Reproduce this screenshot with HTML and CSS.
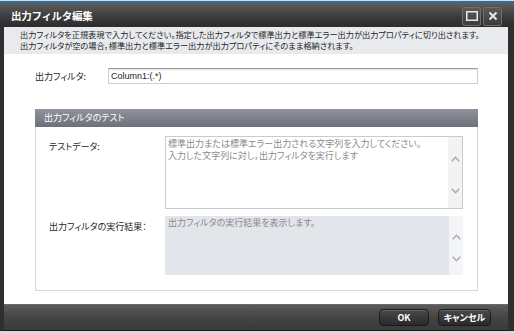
FILE: index.html
```html
<!DOCTYPE html>
<html lang="ja">
<head>
  <meta charset="UTF-8">
  <title>出力フィルタ編集</title>
  <link rel="stylesheet" href="styles.css">
</head>
<body>

  <div class="dialog">
    <div class="titlebar">
      <span class="title">出力フィルタ編集</span>
      <div class="win-buttons">
        <span class="win-btn">
          <svg width="12" height="10" viewBox="0 0 12 10"><rect x="0.75" y="0.75" width="10.5" height="8.5" fill="none" stroke="#e8e8e8" stroke-width="1.5"/></svg>
        </span>
        <span class="win-btn">
          <svg width="10" height="10" viewBox="0 0 10 10"><path d="M1.5 1.5 L8.5 8.5 M8.5 1.5 L1.5 8.5" stroke="#e8e8e8" stroke-width="2"/></svg>
        </span>
      </div>
    </div>

    <div class="frame">
      <div class="desc">
        <p>出力フィルタを正規表現で入力してください。指定した出力フィルタで標準出力と標準エラー出力が出力プロパティに切り出されます。</p>
        <p>出力フィルタが空の場合，標準出力と標準エラー出力が出力プロパティにそのまま格納されます。</p>
      </div>

      <div class="content">
        <div class="filter-row">
          <label class="filter-label">出力フィルタ:</label>
          <div class="text-input">Column1:(.*)</div>
        </div>

        <div class="panel">
          <div class="panel-head">出力フィルタのテスト</div>
          <div class="panel-body">
            <div class="row">
              <label class="row-label">テストデータ:</label>
              <div class="area">
                <div class="area-text">
                  標準出力または標準エラー出力される文字列を入力してください。<br>
                  入力した文字列に対し，出力フィルタを実行します
                </div>
                <div class="scroll">
                  <svg width="9" height="6" viewBox="0 0 9 6"><polyline points="0.8,5.2 4.5,1.2 8.2,5.2" fill="none" stroke="#a9a9a9" stroke-width="1.4"/></svg>
                  <svg width="9" height="6" viewBox="0 0 9 6"><polyline points="0.8,0.8 4.5,4.8 8.2,0.8" fill="none" stroke="#a9a9a9" stroke-width="1.4"/></svg>
                </div>
              </div>
            </div>
            <div class="row">
              <label class="row-label">出力フィルタの実行結果：</label>
              <div class="area area-result">
                <div class="area-text">出力フィルタの実行結果を表示します。</div>
                <div class="scroll">
                  <svg width="9" height="6" viewBox="0 0 9 6"><polyline points="0.8,5.2 4.5,1.2 8.2,5.2" fill="none" stroke="#a9a9a9" stroke-width="1.4"/></svg>
                  <svg width="9" height="6" viewBox="0 0 9 6"><polyline points="0.8,0.8 4.5,4.8 8.2,0.8" fill="none" stroke="#a9a9a9" stroke-width="1.4"/></svg>
                </div>
              </div>
            </div>
          </div>
        </div>
      </div>

      <div class="footer">
        <button class="btn btn-ok">OK</button>
        <button class="btn btn-cancel">キャンセル</button>
      </div>
    </div>
  </div>

</body>
</html>
```

FILE: styles.css
```css
body {
  margin: 0;
  background: #d9d9d9;
  font-family: "Noto Sans CJK JP", sans-serif;
  font-size: 9px;
  color: #1e1e1e;
}
.dialog {
  width: 514px;
  margin-top: 1px;
}
.titlebar {
  height: 24px;
  border-top: 2px solid #2a6ea6;
  background: linear-gradient(#5e5e5e, #3a3a3a 60%, #2c2c2c);
  display: flex;
  align-items: center;
  justify-content: space-between;
  padding: 0 12px 0 11px;
}
.title {
  color: #fff;
  font-size: 10.5px;
  font-weight: bold;
  letter-spacing: -0.3px;
}
.win-buttons {
  display: flex;
  gap: 2px;
  margin-top: 2px;
}
.win-btn {
  width: 17px;
  height: 17px;
  border: 1px solid #6e6e6e;
  border-radius: 2px;
  background: linear-gradient(#5a5a5a, #3c3c3c);
  display: flex;
  align-items: center;
  justify-content: center;
}
.frame {
  border-left: 4px solid #2f2f2f;
  border-right: 6px solid #2f2f2f;
  border-bottom: 1px solid #1c1c1c;
  background: #fff;
}
.desc {
  background: #e8eaee;
  padding: 2px 15px 3px 16px;
  height: 22px;
  font-size: 8.2px;
  font-feature-settings: "palt";
  line-height: 11px;
  white-space: nowrap;
}
.desc p {
  margin: 0;
}
.content {
  padding: 14px 30px 13px 31px;
}
.filter-row {
  display: flex;
  align-items: center;
}
.filter-label {
  width: 73px;
  font-feature-settings: "palt";
}
.text-input {
  flex: 1;
  height: 14px;
  line-height: 14px;
  border: 1px solid #cfcfcf;
  border-top-color: #9a9a9a;
  box-shadow: inset 0 1px 1px #e4e4e4;
  padding: 0 2px;
  font-family: "Liberation Sans", "Noto Sans CJK JP", sans-serif;
  font-size: 9px;
}
.panel {
  margin-top: 25px;
  border: 1px solid #d6d6d6;
  border-top: none;
}
.panel-head {
  height: 18px;
  line-height: 18px;
  margin: 0 -1px;
  padding-left: 9px;
  background: linear-gradient(#8f939d, #6c707a);
  color: #fff;
  font-feature-settings: "palt";
}
.panel-body {
  padding: 9px 14px 15px 13px;
  display: flex;
  flex-direction: column;
  gap: 7px;
}
.row {
  display: flex;
}
.row-label {
  width: 116px;
  padding-top: 4px;
  font-feature-settings: "palt";
}
.area {
  flex: 1;
  height: 71px;
  border: 1px solid #cbcbcb;
  display: flex;
  color: #8a8a8a;
  font-feature-settings: "palt";
}
.area-text {
  flex: 1;
  padding: 1px 2px;
  line-height: 12px;
}
.area-result {
  height: 59px;
  border: none;
  background: #e2e5ea;
}
.area-result .area-text {
  padding: 1px 3px;
}
.scroll {
  width: 14px;
  background: #f3f3f4;
  display: flex;
  flex-direction: column;
  align-items: center;
  justify-content: center;
  gap: 26px;
  padding-top: 4px;
}
.area-result .scroll {
  gap: 16px;
  background: #f4f5f6;
}
.footer {
  height: 25px;
  background: linear-gradient(#5b5b5b, #454545 50%, #3a3a3a);
  border-top: 1px solid #6a6a6a;
  display: flex;
  justify-content: flex-end;
  align-items: center;
  gap: 9px;
  padding-right: 17px;
}
.btn {
  height: 17px;
  padding: 0;
  border: 1px solid #1a1a1a;
  border-radius: 4px;
  background: linear-gradient(#4a4a4a, #2a2a2a);
  color: #fff;
  font-family: "Noto Sans CJK JP", sans-serif;
  font-size: 9px;
  font-weight: bold;
  box-shadow: inset 0 1px 0 #666;
}
.btn-ok {
  width: 50px;
}
.btn-cancel {
  width: 53px;
  font-feature-settings: "palt";
}
```
